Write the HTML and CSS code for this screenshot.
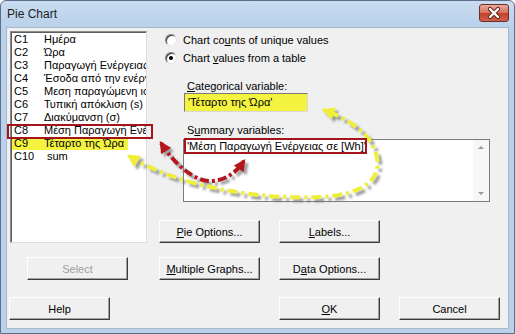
FILE: index.html
```html
<!DOCTYPE html>
<html>
<head>
  <meta charset="UTF-8">
  <title>Pie Chart</title>
  <link rel="stylesheet" href="styles.css">
</head>
<body>
  <div class="window">
    <div class="titlebar">
      <span class="title">Pie Chart</span>
      <span class="close">
        <svg width="30" height="18" viewBox="0 0 30 18">
          <path d="M11 5 L19 13 M19 5 L11 13" stroke="#5a2118" stroke-width="4.2" stroke-linecap="round"/>
          <path d="M11 5 L19 13 M19 5 L11 13" stroke="#fff" stroke-width="2.4" stroke-linecap="round"/>
        </svg>
      </span>
    </div>

    <div class="client">
      <div class="top">
        <!-- worksheet columns -->
        <div class="varlist">
          <div class="var"><span class="col">C1</span><span>Ημέρα</span></div>
          <div class="var"><span class="col">C2</span><span>Ώρα</span></div>
          <div class="var"><span class="col">C3</span><span>Παραγωγή Ενέργειας σε [Wh]</span></div>
          <div class="var"><span class="col">C4</span><span>Έσοδα από την ενέργεια</span></div>
          <div class="var"><span class="col">C5</span><span>Μεση παραγώμενη ισχύς</span></div>
          <div class="var"><span class="col">C6</span><span>Τυπική απόκλιση (s)</span></div>
          <div class="var"><span class="col">C7</span><span>Διακύμανση (σ)</span></div>
          <div class="var"><span class="col">C8</span><span>Μέση Παραγωγή Ενέργειας σε [Wh]</span></div>
          <div class="var hl"><span class="col">C9</span><span>Τέταρτο της Ώρα</span></div>
          <div class="var"><span class="col">C10</span><span class="sum">sum</span></div>
        </div>

        <div class="opts">
          <label class="radio"><span class="dot"></span><span>Chart co<u>u</u>nts of unique values</span></label>
          <label class="radio on"><span class="dot"></span><span>Chart <u>v</u>alues from a table</span></label>
          <div class="field-label"><u>C</u>ategorical variable:</div>
          <div class="input hl">'Τέταρτο της Ώρα'</div>
          <div class="field-label sum-label">S<u>u</u>mmary variables:</div>
          <div class="textarea">
            <div class="tx">'Μέση Παραγωγή Ενέργειας σε [Wh]'</div>
            <div class="scroll">
              <span class="arrow up"></span>
              <span class="arrow down"></span>
            </div>
          </div>
          <div class="btnrow">
            <button class="btn"><u>P</u>ie Options...</button>
            <button class="btn"><u>L</u>abels...</button>
          </div>
        </div>
      </div>

      <div class="row2">
        <button class="btn" disabled>Select</button>
        <button class="btn graphs"><u>M</u>ultiple Graphs...</button>
        <button class="btn">D<u>a</u>ta Options...</button>
      </div>

      <div class="row3">
        <button class="btn">Help</button>
        <button class="btn ok"><u>O</u>K</button>
        <button class="btn">Cancel</button>
      </div>
    </div>

    <!-- annotations drawn over the dialog -->
    <svg class="marks" width="515" height="334" viewBox="0 0 515 334">
      <defs>
        <filter id="shade" x="-20%" y="-20%" width="140%" height="140%">
          <feDropShadow dx="3" dy="3" stdDeviation="1.3" flood-color="#777" flood-opacity="0.7"/>
        </filter>
        <marker id="headY" viewBox="0 0 10 10" refX="8" refY="5" markerWidth="15" markerHeight="13" markerUnits="userSpaceOnUse" orient="auto-start-reverse">
          <path d="M0 0 L10 5 L0 10 z" fill="#eeee3a"/>
        </marker>
        <marker id="headR" viewBox="0 0 10 10" refX="8" refY="5" markerWidth="13" markerHeight="12" markerUnits="userSpaceOnUse" orient="auto-start-reverse">
          <path d="M0 0 L10 5 L0 10 z" fill="#b3141a"/>
        </marker>
      </defs>
      <g filter="url(#shade)">
        <path d="M129 156 C175 185 255 200 320 197 C362 195 381 180 377 158 C373 136 352 120 324 110"
              fill="none" stroke="#eeee3a" stroke-width="4" stroke-dasharray="10 4 3 4"
              marker-start="url(#headY)" marker-end="url(#headY)"/>
        <path d="M161 143 C175 165 195 182 212 181 C228 180 238 170 244 161"
              fill="none" stroke="#b3141a" stroke-width="4" stroke-dasharray="9 3 3 3"
              marker-start="url(#headR)" marker-end="url(#headR)"/>
      </g>
      <rect x="8" y="125" width="144" height="13" fill="none" stroke="#a3151b" stroke-width="2"/>
      <rect x="185" y="139" width="181" height="14" fill="none" stroke="#a3151b" stroke-width="2"/>
    </svg>
  </div>
</body>
</html>
```

FILE: styles.css
```css
body {
  margin: 0;
  font-family: "Liberation Sans", Arial, sans-serif;
  font-size: 11px;
  color: #000;
}

/* window frame */
.window {
  position: relative;
  width: 515px;
  height: 334px;
  box-sizing: border-box;
  display: flex;
  flex-direction: column;
  padding: 0 5px 4px 5px;
  border: 1px solid #5b6f8b;
  border-radius: 6px 6px 0 0;
  background: linear-gradient(#c9dcf1, #b9d1ea 26px, #b9d1ea);
}

.titlebar {
  height: 26px;
  display: flex;
  justify-content: space-between;
}

.title {
  padding: 6px 0 0 1px;
  font-size: 12px;
  color: #1e1e1e;
}

.close {
  margin-top: 3px;
  width: 30px;
  height: 18px;
  box-sizing: border-box;
  border: 1px solid #6e3026;
  border-radius: 3px;
  background: linear-gradient(#e9a99b, #d6705d 50%, #c2402b 51%, #d0604a);
  display: flex;
  align-items: center;
  justify-content: center;
  overflow: hidden;
}

.close svg {
  flex: none;
}

/* client area */
.client {
  flex: 1;
  background: #f0f0f0;
  border: 1px solid #a8b8cb;
}

.top {
  display: flex;
  height: 212px;
  margin: 3px 0 0 3px;
}

.varlist {
  width: 137px;
  height: 212px;
  box-sizing: border-box;
  padding-top: 1px;
  overflow: hidden;
  background: #fff;
  border: 1px solid;
  border-color: #8a8a8a #dcdcdc #dcdcdc #8a8a8a;
  box-shadow: inset 1px 1px 0 #5e5e5e;
}

.var {
  display: flex;
  white-space: nowrap;
  line-height: 13px;
  margin-left: 1px;
  padding-left: 2px;
}

.var .col {
  width: 30px;
  flex: none;
}

.var.hl {
  width: fit-content;
  padding-right: 4px;
  background: #f3f340;
}

.var .sum {
  padding-left: 3px;
}

/* right side options */
.opts {
  display: flex;
  flex-direction: column;
  align-items: flex-start;
}

.radio {
  display: flex;
  align-items: center;
  gap: 6px;
  height: 14px;
  margin: 2px 0 0 18px;
  white-space: nowrap;
}

.radio + .radio {
  margin-top: 4px;
}

.dot {
  width: 12px;
  height: 12px;
  box-sizing: border-box;
  border-radius: 50%;
  border: 1px solid;
  border-color: #7a7a7a #e8e8e8 #e8e8e8 #7a7a7a;
  background: #fff;
  box-shadow: inset 1px 1px 0 #404040;
  display: flex;
  align-items: center;
  justify-content: center;
}

.radio.on .dot::after {
  content: "";
  width: 4px;
  height: 4px;
  border-radius: 50%;
  background: #000;
}

.field-label {
  line-height: 14px;
  margin: 14px 0 0 40px;
}

.field-label.sum-label {
  margin-top: 11px;
}

.input {
  width: 124px;
  height: 19px;
  box-sizing: border-box;
  margin-left: 37px;
  padding-left: 3px;
  line-height: 17px;
  border: 1px solid;
  border-color: #7a7a7a #d8d8d8 #d8d8d8 #7a7a7a;
  background: #fff;
}

.input.hl {
  background: #f3f340;
}

.textarea {
  display: flex;
  width: 307px;
  height: 63px;
  box-sizing: border-box;
  margin: 2px 0 0 36px;
  border: 1px solid #7c7c7c;
  background: #fff;
}

.tx {
  flex: 1;
  padding-left: 3px;
  line-height: 13px;
  white-space: nowrap;
}

.scroll {
  width: 16px;
  display: flex;
  flex-direction: column;
  justify-content: space-between;
  align-items: center;
  padding: 6px 0;
  background: #f7f7f7;
}

.arrow {
  width: 0;
  height: 0;
  border-left: 3px solid transparent;
  border-right: 3px solid transparent;
}

.arrow.up {
  border-bottom: 3px solid #9a9a9a;
}

.arrow.down {
  border-top: 3px solid #9a9a9a;
}

/* buttons */
.btn {
  width: 101px;
  height: 23px;
  padding: 0;
  box-sizing: border-box;
  font-family: inherit;
  font-size: 11px;
  color: #000;
  background: #f0f0f0;
  border: 1px solid;
  border-color: #fff #3c3c3c #3c3c3c #fff;
  box-shadow: inset -1px -1px 0 #a0a0a0;
  border-radius: 0;
}

.btn:disabled {
  color: #a0a0a0;
}

.btnrow {
  display: flex;
  gap: 19px;
  margin: 18px 0 0 12px;
}

.row2 {
  display: flex;
  gap: 19px;
  margin-top: 14px;
  padding-left: 20px;
}

.row2 .graphs {
  margin-left: 12px;
}

.row3 {
  display: flex;
  gap: 19px;
  margin-top: 17px;
  padding-left: 2px;
}

.row3 .ok {
  margin-left: 150px;
}

.marks {
  position: absolute;
  left: -1px;
  top: -1px;
  pointer-events: none;
}
```
